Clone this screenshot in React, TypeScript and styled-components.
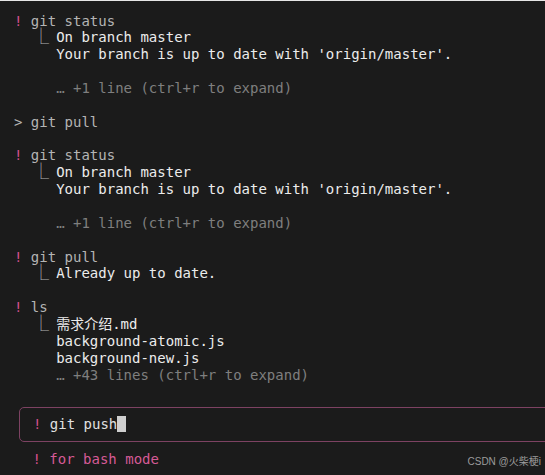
import React from "react";
import styled, { createGlobalStyle } from "styled-components";

const Global = createGlobalStyle`
  html, body { margin: 0; padding: 0; background: #1b1b1b; }
  #root { width: 545px; height: 475px; }
`;

const Terminal = styled.div`
  position: relative;
  box-sizing: border-box;
  width: 545px;
  height: 475px;
  overflow: hidden;
  background: #1b1b1b;
  border-top: 1px solid #e6e6e6;
  padding: 11.5px 0 0 14px;
  display: flex;
  flex-direction: column;
  font-family: "DejaVu Sans Mono", "Liberation Mono", "Noto Sans CJK SC", monospace;
  font-size: 14px;
  line-height: 16.86px;
  color: #ececec;
`;

const Line = styled.div<{ $tone?: "out" | "cmd" | "dim" }>`
  white-space: pre;
  height: 16.86px;
  color: ${(p) => (p.$tone === "cmd" ? "#b4b4b4" : p.$tone === "dim" ? "#7f7f7f" : "#ececec")};
`;

const Bang = styled.span`
  color: #d4508c;
`;

const Elbow = styled.span`
  display: inline-block;
  width: 25.3px;
  padding-left: 19px;
  box-sizing: border-box;
  color: #b0b0b0;
  font-size: 16px;
  line-height: 16.86px;
  vertical-align: top;
`;

const Indent = styled.span<{ $cols: number }>`
  display: inline-block;
  width: ${(p) => p.$cols * 8.43}px;
`;

const InputBox = styled.div`
  margin: 24px -20px 0 5px;
  height: 35px;
  box-sizing: border-box;
  border: 1.5px solid #7d4262;
  border-radius: 5px;
  padding: 7.5px 0 0 13px;
  display: flex;
  align-items: flex-start;
  white-space: pre;
`;

const InputText = styled.span`
  color: #e0e0e0;
`;

const Cursor = styled.span`
  display: inline-block;
  width: 8.4px;
  height: 16px;
  background: #cfcfcf;
  margin-top: 0.5px;
`;

const Hint = styled.div`
  margin: 8.5px 0 0 18.5px;
  white-space: pre;
  color: #d65a96;
`;

const Watermark = styled.div`
  position: absolute;
  right: 4px;
  bottom: 7px;
  font-family: "Liberation Sans", "Noto Sans CJK SC", sans-serif;
  font-size: 10px;
  line-height: 12px;
  color: #9c9c9c;
`;

const Cmd = ({ text, prompt = "!" }: { text: string; prompt?: string }) => (
  <Line $tone="cmd">
    {prompt === "!" ? <Bang>!</Bang> : prompt}
    {" " + text}
  </Line>
);

const OutFirst = ({ text }: { text: string }) => (
  <Line $tone="out">
    <Elbow>⎿</Elbow>
    <Indent $cols={2} />
    {text}
  </Line>
);

const Out = ({ text }: { text: string }) => (
  <Line $tone="out">
    <Indent $cols={5} />
    {text}
  </Line>
);

const More = ({ text }: { text: string }) => (
  <Line $tone="dim">
    <Indent $cols={5} />
    {text}
  </Line>
);

const Blank = () => <Line />;

export default function App() {
  return (
    <>
      <Global />
      <Terminal>
        <Cmd text="git status" />
        <OutFirst text="On branch master" />
        <Out text="Your branch is up to date with 'origin/master'." />
        <Blank />
        <More text="… +1 line (ctrl+r to expand)" />
        <Blank />
        <Cmd prompt=">" text="git pull" />
        <Blank />
        <Cmd text="git status" />
        <OutFirst text="On branch master" />
        <Out text="Your branch is up to date with 'origin/master'." />
        <Blank />
        <More text="… +1 line (ctrl+r to expand)" />
        <Blank />
        <Cmd text="git pull" />
        <OutFirst text="Already up to date." />
        <Blank />
        <Cmd text="ls" />
        <OutFirst text="需求介绍.md" />
        <Out text="background-atomic.js" />
        <Out text="background-new.js" />
        <More text="… +43 lines (ctrl+r to expand)" />
        <InputBox>
          <Bang>!</Bang>
          <InputText> git push</InputText>
          <Cursor />
        </InputBox>
        <Hint>
          <Bang>!</Bang> for bash mode
        </Hint>
        <Watermark>CSDN @火柴梗i</Watermark>
      </Terminal>
    </>
  );
}
